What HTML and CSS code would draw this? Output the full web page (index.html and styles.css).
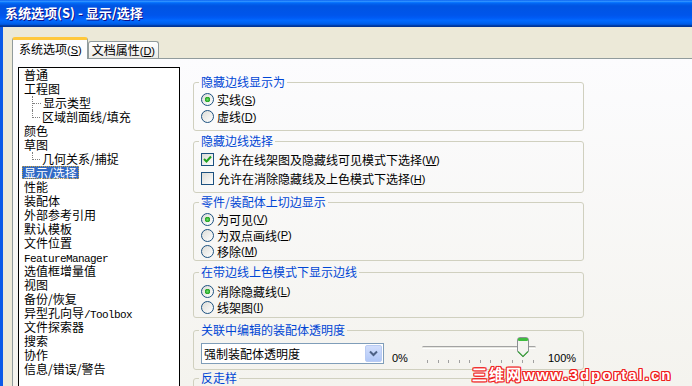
FILE: index.html
```html
<!DOCTYPE html>
<html lang="zh-CN">
<head>
  <meta charset="UTF-8" />
  <title>系统选项 - 显示/选择</title>
  <link rel="stylesheet" href="styles.css">
</head>
<body>

  <div class="titlebar">系统选项(S) - 显示/选择</div>

  <div class="frame">

    <!-- TABS -->
    <div class="tabs">
      <div class="tab active">系统选项<span class="key">(<u>S</u>)</span></div>
      <div class="tab">文档属性<span class="key">(<u>D</u>)</span></div>
    </div>

    <div class="panel">

      <!-- OPTION TREE -->
      <ul class="tree">
        <li>普通</li>
        <li><span class="node">工程图</span>
          <ul class="sub">
            <li>显示类型</li>
            <li>区域剖面线/填充</li>
          </ul>
        </li>
        <li>颜色</li>
        <li><span class="node">草图</span>
          <ul class="sub">
            <li>几何关系/捕捉</li>
          </ul>
        </li>
        <li><span class="sel">显示/选择</span></li>
        <li>性能</li>
        <li>装配体</li>
        <li>外部参考引用</li>
        <li>默认模板</li>
        <li>文件位置</li>
        <li><span class="lat">FeatureManager</span></li>
        <li>选值框增量值</li>
        <li>视图</li>
        <li>备份/恢复</li>
        <li>异型孔向导<span class="lat">/Toolbox</span></li>
        <li>文件探索器</li>
        <li>搜索</li>
        <li>协作</li>
        <li>信息/错误/警告</li>
      </ul>

      <!-- OPTIONS -->
      <div class="opts">

        <fieldset class="grp g-hide">
          <legend>隐藏边线显示为</legend>
          <div class="opt"><span class="radio on"></span>实线<span class="key">(<u>S</u>)</span></div>
          <div class="opt"><span class="radio"></span>虚线<span class="key">(<u>D</u>)</span></div>
        </fieldset>

        <fieldset class="grp g-sel">
          <legend>隐藏边线选择</legend>
          <div class="opt">
            <span class="check"><svg width="11" height="11" viewBox="0 0 11 11"><polyline points="2,5 4.5,7.5 9,2.5" fill="none" stroke="#21a121" stroke-width="2"/></svg></span>允许在线架图及隐藏线可见模式下选择<span class="key">(<u>W</u>)</span>
          </div>
          <div class="opt">
            <span class="check"></span>允许在消除隐藏线及上色模式下选择<span class="key">(<u>H</u>)</span>
          </div>
        </fieldset>

        <fieldset class="grp g-tan">
          <legend>零件/装配体上切边显示</legend>
          <div class="opt"><span class="radio on"></span>为可见<span class="key">(<u>V</u>)</span></div>
          <div class="opt"><span class="radio"></span>为双点画线<span class="key">(<u>P</u>)</span></div>
          <div class="opt"><span class="radio"></span>移除<span class="key">(<u>M</u>)</span></div>
        </fieldset>

        <fieldset class="grp g-edge">
          <legend>在带边线上色模式下显示边线</legend>
          <div class="opt"><span class="radio on"></span>消除隐藏线<span class="key">(<u>L</u>)</span></div>
          <div class="opt"><span class="radio"></span>线架图<span class="key">(<u>I</u>)</span></div>
        </fieldset>

        <fieldset class="grp g-trans">
          <legend>关联中编辑的装配体透明度</legend>
          <div class="trans">
            <div class="combo">
              <span>强制装配体透明度</span>
              <span class="btn"><svg width="9" height="7" viewBox="0 0 9 7"><polyline points="1,1.5 4.5,5 8,1.5" fill="none" stroke="#4d6185" stroke-width="2"/></svg></span>
            </div>
            <span class="pct">0%</span>
            <div class="slider">
              <div class="track"></div>
              <div class="ticks">
                <i></i><i></i><i></i><i></i><i></i><i></i><i></i><i></i><i></i><i></i><i></i>
              </div>
              <svg class="thumb" width="12" height="21" viewBox="0 0 12 21">
                <path d="M0.5,3 Q0.5,0.5 3,0.5 H9 Q11.5,0.5 11.5,3 V14.5 L6,20 L0.5,14.5 Z" fill="#f4f4f0" stroke="#8c9094"/>
                <rect x="1" y="1" width="10" height="3" rx="1" fill="#3fbd3f"/>
                <polyline points="1,14.5 6,19.5 11,14.5" fill="none" stroke="#3fa33f" stroke-width="1.2"/>
              </svg>
            </div>
            <span class="pct pct-max">100%</span>
          </div>
        </fieldset>

        <fieldset class="grp g-aa">
          <legend>反走样</legend>
        </fieldset>

      </div>
    </div>
  </div>

  <div class="mark">三维网www.3dportal.cn</div>

</body>
</html>
```
FILE: styles.css
```css
body {
  margin: 0;
  width: 692px;
  height: 386px;
  overflow: hidden;
  position: relative;
  font: 12px "Noto Sans CJK SC", sans-serif;
  color: #000;
  background: #ece9d8;
}

.titlebar {
  height: 27px;
  padding-left: 5px;
  line-height: 26px;
  color: #fff;
  font-size: 13px;
  font-weight: bold;
  text-shadow: 1px 1px #0f1089;
  background: linear-gradient(#0058ee 0%, #3593ff 4%, #288eff 6%, #127dff 8%, #036ffc 10%, #0262ee 14%, #0057e5 20%, #0054e3 24%, #0055eb 56%, #005bf5 66%, #026afe 76%, #0062ef 86%, #0052d6 92%, #0040ab 94%, #003092 100%);
}

.frame {
  height: 359px;
  display: flex;
  flex-direction: column;
  border-left: 3px solid #0b5ae8;
}

.key { font-family: "Liberation Sans", sans-serif; font-size: 11px; }
.lat { font-family: "Liberation Mono", monospace; font-size: 11px; letter-spacing: -0.6px; }

/* tabs */
.tabs {
  height: 31px;
  flex: none;
  display: flex;
  align-items: flex-end;
  padding-left: 9px;
}
.tab {
  height: 16px;
  line-height: 16px;
  padding: 0 3px;
  border: 1px solid #919b9c;
  border-bottom: none;
  border-radius: 3px 3px 0 0;
  background: linear-gradient(#fff, #ecebe6);
}
.tab.active {
  height: 19px;
  line-height: 17px;
  padding: 0 5px 0 6px;
  margin-bottom: -1px;
  border-top: 3px solid #ffc83c;
  background: #fcfcfe;
  position: relative;
  z-index: 1;
}

.panel {
  flex: 1;
  display: flex;
  overflow: hidden;
  margin-left: 9px;
  padding: 8px 0 0 5px;
  border-top: 1px solid #919b9c;
  border-left: 1px solid #919b9c;
  background: linear-gradient(#fcfcfe, #f4f3ee);
}

/* tree */
.tree {
  list-style: none;
  margin: 0;
  padding: 0 0 0 5px;
  width: 162px;
  height: 340px;
  box-sizing: border-box;
  flex: none;
  border: 1px solid #000;
  background: #fff;
  line-height: 14px;
}
.tree li { height: 14px; }
.tree li:has(.sub) { height: auto; }
.node { display: block; height: 14px; }
.sub {
  list-style: none;
  margin: 0 0 0 8px;
  padding: 0;
}
.sub li {
  display: flex;
  align-items: flex-start;
  border-left: 1px dotted #808080;
}
.sub li::before {
  content: "";
  width: 8px;
  height: 7px;
  margin-right: 2px;
  border-bottom: 1px dotted #808080;
}
.sub li:last-child { border-left: none; }
.sub li:last-child::before {
  border-left: 1px dotted #808080;
  width: 7px;
}
.sel {
  display: inline-block;
  height: 13px;
  padding: 0 2px;
  margin-left: -2px;
  color: #fff;
  background: #316ac5;
  outline: 1px dotted #c8a040;
  outline-offset: -1px;
}

/* option groups */
.opts {
  width: 391px;
  margin: 8px 0 0 13px;
}
.grp {
  margin: 3px 0 0;
  padding: 2px 6px 2px 7px;
  border: 1px solid #d0d0bf;
  border-radius: 3px;
  min-width: 0;
}
.grp legend {
  padding: 0 2px;
  margin-left: -2px;
  line-height: 14px;
  color: #0046d5;
}
.g-hide { margin-top: 0; padding-bottom: 5px; }
.g-hide .opt { height: 17px; }
.g-sel { padding-bottom: 4px; }
.g-sel .opt { height: 19px; }
.g-tan { margin-top: 2px; padding-bottom: 1px; }
.g-edge { margin-top: 4px; padding-top: 4px; }
.g-trans { margin-top: 5px; padding-top: 6px; padding-bottom: 5px; }
.g-aa { margin-top: 1px; height: 40px; }

.opt {
  display: flex;
  align-items: center;
  height: 16px;
}
.radio {
  flex: none;
  width: 13px;
  height: 13px;
  box-sizing: border-box;
  margin-right: 3px;
  border: 1px solid #1c5180;
  border-radius: 50%;
  background: linear-gradient(135deg, #dcdcd7, #fff);
}
.radio.on {
  background: radial-gradient(circle, #6ede6e 0, #21a121 2.5px, transparent 3px), linear-gradient(135deg, #dcdcd7, #fff);
}
.check {
  flex: none;
  width: 13px;
  height: 13px;
  box-sizing: border-box;
  margin-right: 4px;
  border: 1px solid #1c5180;
  background: linear-gradient(135deg, #dcdcd7, #fff);
}
.check svg { display: block; }

/* transparency row */
.trans {
  display: flex;
  align-items: flex-start;
  height: 21px;
}
.combo {
  width: 183px;
  height: 21px;
  box-sizing: border-box;
  display: flex;
  justify-content: space-between;
  border: 1px solid #7f9db9;
  background: #fff;
  line-height: 19px;
}
.combo span:first-child { padding-left: 2px; }
.combo .btn {
  width: 17px;
  height: 17px;
  margin: 1px;
  display: flex;
  align-items: center;
  justify-content: center;
  border-radius: 2px;
  border: 1px solid #b9cbf3;
  box-sizing: border-box;
  background: linear-gradient(#d2defc, #b1c8f7);
}
.pct {
  margin: 8px 0 0 8px;
  line-height: 14px;
  font-family: "Liberation Sans", sans-serif;
  font-size: 11px;
}
.pct-max { margin-left: 11px; }
.slider {
  width: 116px;
  margin-left: 13px;
  position: relative;
}
.track {
  height: 3px;
  margin: 3px 1px 0;
  box-sizing: border-box;
  border-top: 1px solid #a3a3a3;
  border-bottom: 1px solid #fff;
  border-radius: 2px;
  background: #e6e6e0;
}
.ticks {
  display: flex;
  justify-content: space-between;
  margin-top: 11px;
  padding: 0 3px 0 6px;
}
.ticks i {
  width: 1px;
  height: 3px;
  background: #a0a0a0;
}
.thumb {
  position: absolute;
  left: 96px;
  top: -6px;
}

.mark {
  position: absolute;
  left: 472px;
  top: 363px;
  font: bold 15px "Liberation Sans", sans-serif;
  letter-spacing: 2px;
  color: #fff;
  text-shadow: 1px 0 #f02020, -1px 0 #f02020, 0 1px #f02020, 0 -1px #f02020, 1px 1px #f02020, -1px -1px #f02020, 1px -1px #f02020, -1px 1px #f02020;
}
```
